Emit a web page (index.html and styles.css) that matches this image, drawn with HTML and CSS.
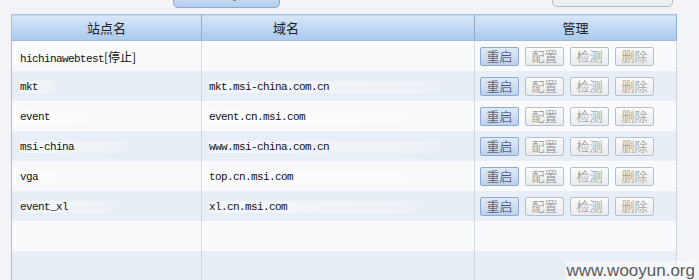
FILE: index.html
```html
<!DOCTYPE html>
<html>
<head>
    <title>站点管理</title>
    <link rel="stylesheet" href="styles.css">
</head>
<body>
    <div class="toolbar">
        <span class="tb-btn tb-blue"><i class="tb-dot dot-green"></i></span>
        <span class="tb-btn tb-gray"><i class="tb-dot dot-yellow"></i></span>
    </div>
    <table class="site-list">
        <colgroup>
            <col class="c-name">
            <col class="c-domain">
            <col class="c-manage">
        </colgroup>
        <thead>
            <tr>
                <th>站点名</th>
                <th class="th-domain">域名</th>
                <th>管理</th>
            </tr>
        </thead>
        <tbody>
            <tr>
                <td><span class="txt">hichinawebtest<span class="cjk">[停止]</span></span></td>
                <td></td>
                <td class="ops"><button class="op op-main">重启</button><button class="op">配置</button><button class="op">检测</button><button class="op">删除</button></td>
            </tr>
            <tr class="alt">
                <td><span class="txt mask" style="padding-right: 19px;">mkt</span></td>
                <td><span class="txt mask" style="padding-right: 120px;">mkt.msi-china.com.cn</span></td>
                <td class="ops"><button class="op op-main">重启</button><button class="op">配置</button><button class="op">检测</button><button class="op">删除</button></td>
            </tr>
            <tr>
                <td><span class="txt mask" style="padding-right: 47px;">event</span></td>
                <td><span class="txt mask" style="padding-right: 120px;">event.cn.msi.com</span></td>
                <td class="ops"><button class="op op-main">重启</button><button class="op">配置</button><button class="op">检测</button><button class="op">删除</button></td>
            </tr>
            <tr class="alt">
                <td><span class="txt mask" style="padding-right: 56px;">msi-china</span></td>
                <td><span class="txt mask" style="padding-right: 120px;">www.msi-china.com.cn</span></td>
                <td class="ops"><button class="op op-main">重启</button><button class="op">配置</button><button class="op">检测</button><button class="op">删除</button></td>
            </tr>
            <tr>
                <td><span class="txt mask" style="padding-right: 22px;">vga</span></td>
                <td><span class="txt mask" style="padding-right: 130px;">top.cn.msi.com</span></td>
                <td class="ops"><button class="op op-main">重启</button><button class="op">配置</button><button class="op">检测</button><button class="op">删除</button></td>
            </tr>
            <tr class="alt">
                <td><span class="txt mask" style="padding-right: 50px;">event_xl</span></td>
                <td><span class="txt mask" style="padding-right: 140px;">xl.cn.msi.com</span></td>
                <td class="ops"><button class="op op-main">重启</button><button class="op">配置</button><button class="op">检测</button><button class="op">删除</button></td>
            </tr>
            <tr>
                <td></td>
                <td></td>
                <td></td>
            </tr>
            <tr class="alt">
                <td></td>
                <td></td>
                <td></td>
            </tr>
        </tbody>
    </table>
    <div class="watermark">www.wooyun.org</div>
</body>
</html>
```

FILE: styles.css
```css
body {
    margin: 0;
    background-color: #f2f4f7;
    font-family: "Liberation Sans", "Noto Sans CJK SC", sans-serif;
    font-size: 12px;
    color: #222;
    width: 699px;
    height: 280px;
    overflow: hidden;
    position: relative;
}
.toolbar {
    height: 14px;
    display: flex;
    overflow: hidden;
}
.tb-btn {
    display: block;
    height: 22px;
    margin-top: -14px;
    border-radius: 5px;
    box-sizing: border-box;
    position: relative;
}
.tb-blue {
    margin-left: 173px;
    width: 107px;
    border: 1px solid #8ba9d3;
    background: linear-gradient(#d9e6f7, #b6cff0);
}
.tb-gray {
    margin-left: 272px;
    width: 121px;
    margin-top: -15px;
    border: 1px solid #b4bcc6;
    background: linear-gradient(#fafbfc, #e9edf1);
}
.tb-dot {
    position: absolute;
    bottom: 6px;
    width: 3px;
    height: 2px;
    border-radius: 1px;
}
.dot-green {
    left: 59px;
    background-color: #4a8a5a;
}
.dot-yellow {
    left: 33px;
    background-color: #a8b840;
}
.site-list {
    margin-left: 11px;
    width: 666px;
    border-collapse: collapse;
    table-layout: fixed;
    border-left: 1px solid #a6bcd8;
}
.c-name {
    width: 190px;
}
.c-domain {
    width: 273px;
}
.site-list th {
    height: 25px;
    padding: 0;
    font-weight: normal;
    font-size: 13px;
    line-height: 16px;
    color: #222;
    text-align: center;
    background: linear-gradient(#d8e7f8, #a9c9ee);
    border-top: 1px solid #a9c2df;
    border-bottom: 1px solid #a3bbd8;
    border-right: 1px solid #8fadd1;
    font-family: "Noto Sans CJK SC", sans-serif;
}
.site-list th.th-domain {
    text-align: left;
    padding-left: 71px;
}
.site-list td {
    height: 30px;
    padding: 0 0 0 8px;
    border-right: 1px solid #cdd8e4;
    background-color: #f9fafc;
    vertical-align: middle;
    white-space: nowrap;
    overflow: hidden;
}
.site-list tr.alt td {
    background-color: #e8eef5;
}
.site-list td:nth-child(2) {
    padding-left: 7px;
}
.txt {
    font-family: "Liberation Mono", "Noto Sans CJK SC", monospace;
    font-size: 11px;
    letter-spacing: -0.6px;
    color: #111;
}
.cjk {
    font-family: "Noto Sans CJK SC", sans-serif;
    font-size: 12px;
    letter-spacing: 0;
}
.mask {
    display: inline-block;
    background: linear-gradient(90deg, rgba(255, 255, 255, 0.55), rgba(255, 255, 255, 0.25) 85%, rgba(255, 255, 255, 0));
}
.site-list td.ops {
    padding-left: 5px;
}
.op {
    width: 39px;
    height: 19px;
    margin-right: 6px;
    padding: 0;
    border: 1px solid #b8c0ca;
    border-radius: 2px;
    background: linear-gradient(#fbfcfd, #e7ebef);
    color: #8a8a8a;
    font-family: "Noto Sans CJK SC", sans-serif;
    font-size: 13px;
    font-weight: 300;
    line-height: 16px;
    vertical-align: middle;
}
.op-main {
    border-color: #8ea8cf;
    background: linear-gradient(#e1ebf8, #bcd1ee);
    color: #2a3550;
}
.watermark {
    position: absolute;
    right: 4px;
    bottom: 0;
    font-family: "Liberation Sans", sans-serif;
    font-size: 17px;
    line-height: 19px;
    color: #5a5a5a;
    background: rgba(255, 255, 255, 0.5);
}
```
